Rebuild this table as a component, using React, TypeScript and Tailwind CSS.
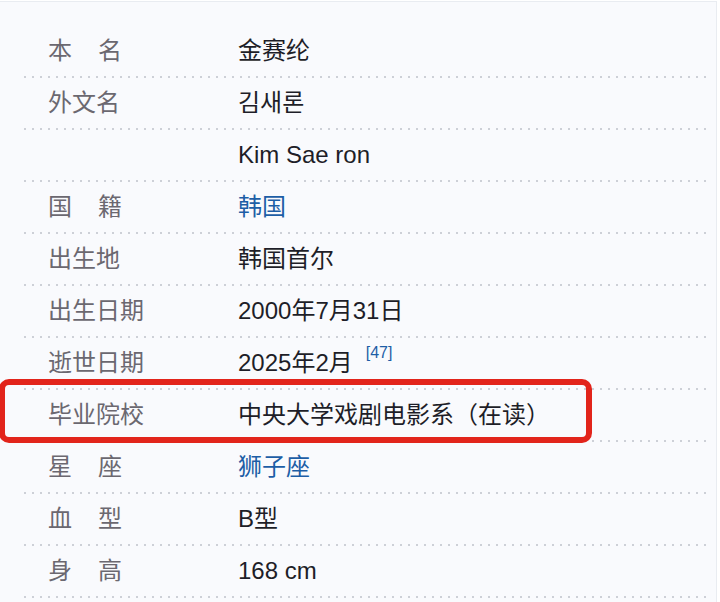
import React from "react";

type Row = {
  label: React.ReactNode;
  value: React.ReactNode;
  highlight?: boolean;
};

const FONT = "font-['Liberation_Sans','Noto_Sans_CJK_SC',sans-serif]";

function Spaced({ a, b }: { a: string; b: string }) {
  return (
    <span className="flex">
      <span>{a}</span>
      <span className="w-[26px]" />
      <span>{b}</span>
    </span>
  );
}

const link = "text-[#1d5ea6]";

const rows: Row[] = [
  { label: <Spaced a="本" b="名" />, value: "金赛纶" },
  { label: "外文名", value: "김새론" },
  { label: "", value: "Kim Sae ron" },
  { label: <Spaced a="国" b="籍" />, value: <span className={link}>韩国</span> },
  { label: "出生地", value: "韩国首尔" },
  { label: "出生日期", value: "2000年7月31日" },
  {
    label: "逝世日期",
    value: (
      <span className="flex items-baseline">
        <span>2025年2月</span>
        <span className={`${link} relative -top-[13px] ml-[13px] text-[16px]`}>[47]</span>
      </span>
    ),
  },
  { label: "毕业院校", value: "中央大学戏剧电影系（在读）", highlight: true },
  { label: <Spaced a="星" b="座" />, value: <span className={link}>狮子座</span> },
  { label: <Spaced a="血" b="型" />, value: "B型" },
  { label: <Spaced a="身" b="高" />, value: "168 cm" },
];

function Dots() {
  return (
    <div className="ml-[24px] mr-[4px] h-[2px] bg-[linear-gradient(to_right,#cdd0d7_2px,transparent_2px)] bg-[length:8px_2px]" />
  );
}

export default function App() {
  return (
    <div className={`w-[720px] h-[602px] overflow-hidden bg-white ${FONT}`}>
      <div className="h-full mt-[1px] mr-[3px] border-t border-r border-[#e9ecf1] bg-[#f9fafd] pt-[24px]">
        {rows.map((r, i) => (
          <div key={i} className="relative">
            <div className="flex h-[50px] items-center text-[24px] leading-none">
              <div className="w-[238px] shrink-0 pl-[48px] text-[#6b6870]">{r.label}</div>
              <div className="text-[#1e1e28]">{r.value}</div>
            </div>
            <Dots />
            {r.highlight && (
              <div className="absolute left-[-1px] top-[-11px] h-[64px] w-[593px] rounded-[10px] border-[6px] border-[#e2241b]" />
            )}
          </div>
        ))}
      </div>
    </div>
  );
}
